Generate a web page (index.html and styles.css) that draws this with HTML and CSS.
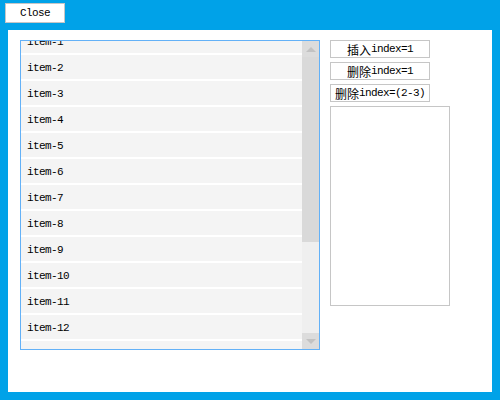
FILE: index.html
```html
<!DOCTYPE html>
<html>
<head>
<meta charset="utf-8">
<link rel="stylesheet" href="styles.css">
</head>
<body>
<div class="header">
  <button class="btn close-btn">Close</button>
</div>
<div class="panel">
  <div class="listbox">
    <div class="list-view">
      <div class="list-items">
        <div class="item">item-1</div>
        <div class="item">item-2</div>
        <div class="item">item-3</div>
        <div class="item">item-4</div>
        <div class="item">item-5</div>
        <div class="item">item-6</div>
        <div class="item">item-7</div>
        <div class="item">item-8</div>
        <div class="item">item-9</div>
        <div class="item">item-10</div>
        <div class="item">item-11</div>
        <div class="item">item-12</div>
        <div class="item">item-13</div>
      </div>
    </div>
    <div class="scrollbar">
      <div class="sb-btn"><span class="arrow-up"></span></div>
      <div class="sb-thumb"></div>
      <div class="sb-track"></div>
      <div class="sb-btn"><span class="arrow-down"></span></div>
    </div>
  </div>
  <div class="side">
    <button class="btn side-btn"><span class="cjk">插入</span>index=1</button>
    <button class="btn side-btn"><span class="cjk">删除</span>index=1</button>
    <button class="btn side-btn"><span class="cjk">删除</span>index=(2-3)</button>
    <div class="textbox"></div>
  </div>
</div>
</body>
</html>
```

FILE: styles.css
```css
html, body {
  margin: 0;
  padding: 0;
}
body {
  width: 500px;
  height: 400px;
  background: #00a2e8;
  font-family: "Liberation Mono", "Noto Sans CJK SC", monospace;
  font-size: 11px;
  letter-spacing: -0.6px;
  color: #000;
  box-sizing: border-box;
  padding-bottom: 8px;
  display: flex;
  flex-direction: column;
  overflow: hidden;
}
.header {
  height: 30px;
  flex: none;
  padding: 3px 0 0 5px;
  box-sizing: border-box;
  display: flex;
  align-items: flex-start;
}
.btn {
  font-family: inherit;
  font-size: 11px;
  letter-spacing: -0.6px;
  background: #fff;
  border: 1px solid #c6c6c6;
  margin: 0;
  padding: 0;
  color: #000;
  display: flex;
  align-items: center;
  justify-content: center;
  box-sizing: border-box;
}
.cjk {
  font-family: "Noto Sans CJK SC", sans-serif;
  font-size: 12px;
  letter-spacing: 0;
}
.close-btn {
  width: 60px;
  height: 20px;
}
.panel {
  flex: 1;
  margin: 0 8px;
  background: #fff;
  display: flex;
  align-items: flex-start;
  padding: 10px 0 0 12px;
  gap: 10px;
}
.listbox {
  width: 300px;
  height: 310px;
  box-sizing: border-box;
  border: 1px solid #63b1f7;
  display: flex;
}
.list-view {
  width: 281px;
  height: 308px;
  overflow: hidden;
  background: #fff;
}
.list-items {
  margin-top: -12px;
}
.item {
  height: 24px;
  border-bottom: 2px solid #fff;
  background: #f4f4f4;
  padding-left: 6px;
  padding-top: 1px;
  box-sizing: content-box;
  display: flex;
  align-items: center;
}
.item {
  height: 23px;
}
.scrollbar {
  width: 17px;
  height: 308px;
  background: #efefef;
  display: flex;
  flex-direction: column;
}
.sb-btn {
  height: 16px;
  background: #dcdcdc;
  display: flex;
  align-items: center;
  justify-content: center;
}
.sb-thumb {
  height: 185px;
  background: #d9d9d9;
}
.sb-track {
  flex: 1;
  background: #efefef;
}
.arrow-up, .arrow-down {
  width: 0;
  height: 0;
  border-left: 5px solid transparent;
  border-right: 5px solid transparent;
}
.arrow-up {
  border-bottom: 5px solid #c2c2c2;
}
.arrow-down {
  border-top: 5px solid #c2c2c2;
}
.side {
  display: flex;
  flex-direction: column;
  gap: 4px;
}
.side-btn {
  width: 100px;
  height: 18px;
}
.textbox {
  width: 120px;
  height: 200px;
  box-sizing: border-box;
  border: 1px solid #c6c6c6;
  background: #fff;
}
```
